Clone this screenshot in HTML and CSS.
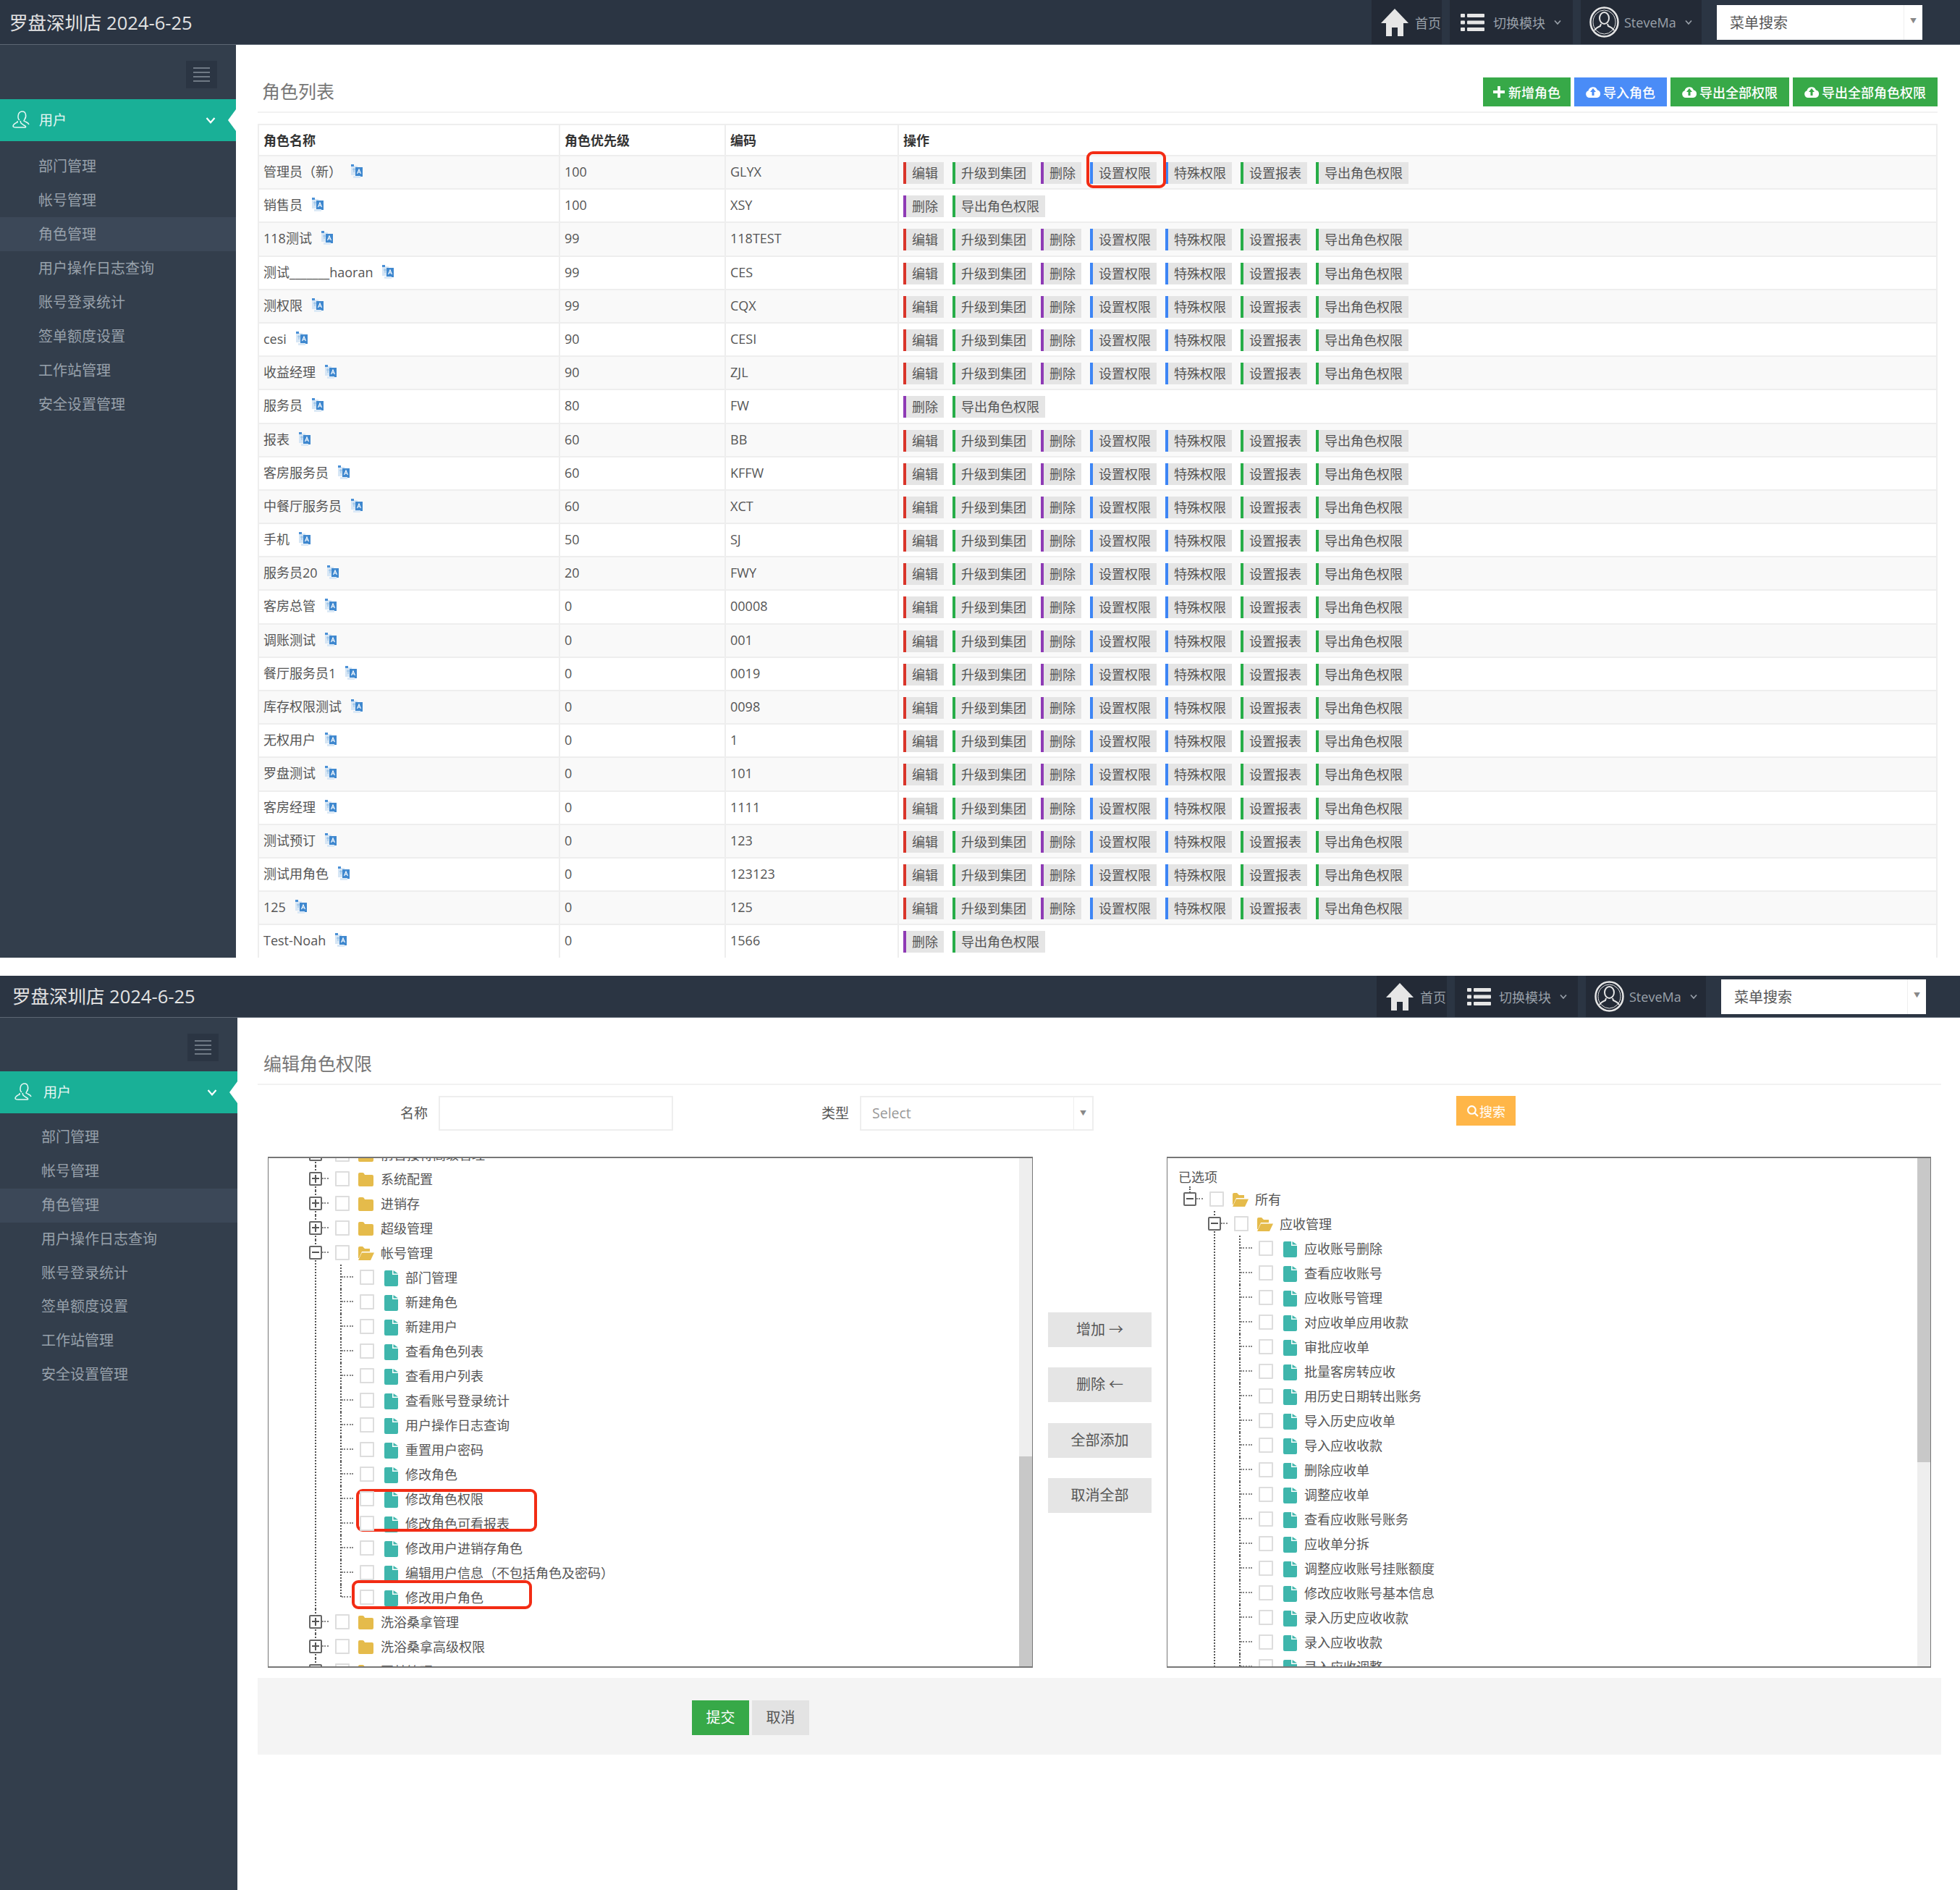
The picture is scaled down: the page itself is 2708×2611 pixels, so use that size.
FILE: index.html
```html
<html>
<head>
	<meta charset="utf-8">
	<link rel="stylesheet" href="styles.css">
</head>
<body>
<svg class="iconDefs" width="0" height="0">
	<symbol id="iconHome" viewBox="0 0 38 38"><path d="M19 0 38 20H31V38H23V26H15V38H7V20H0Z" fill="currentColor"/></symbol>
	<symbol id="iconList" viewBox="0 0 33 24"><g fill="currentColor"><rect x="0" y="0" width="6" height="5" rx="1"/><rect x="9" y="0" width="24" height="5" rx="1"/><rect x="0" y="9.500" width="6" height="5" rx="1"/><rect x="9" y="9.500" width="24" height="5" rx="1"/><rect x="0" y="19" width="6" height="5" rx="1"/><rect x="9" y="19" width="24" height="5" rx="1"/></g></symbol>
	<symbol id="iconAvatar" viewBox="0 0 41 43"><g fill="none" stroke="currentColor"><ellipse cx="20.500" cy="21.500" rx="19" ry="20" stroke-width="2.500"/><ellipse cx="20.500" cy="21.500" rx="15.500" ry="16.500" stroke-width="1"/><ellipse cx="20.500" cy="16" rx="6.500" ry="8" stroke-width="2"/><path d="M16 24 15 27C10 29 8 31 7 33M25 24 26 27C31 29 33 31 34 33" stroke-width="2"/></g></symbol>
	<symbol id="iconChevron" viewBox="0 0 10 8"><path d="M1 1.500 5 6 9 1.500" fill="none" stroke="currentColor" stroke-width="1.600"/></symbol>
	<symbol id="iconUser" viewBox="0 0 24 25"><g fill="none" stroke="currentColor" stroke-width="1.500"><path d="M10 14C7 12 7 3 13 2 19 1 20 9 17 13L16 15C19 17 22 17 23 20"/><path d="M7 15 7 17C4 18 2 19 1 22 1 24 3 24 5 24H18C19 24 19 22 16 21L12 18 11 15"/></g></symbol>
	<symbol id="iconCloud" viewBox="0 0 20 20"><path fill-rule="evenodd" fill="currentColor" d="M5 18A5 5 0 0 1 3.500 8.300 6.500 6.500 0 0 1 16 7.600 5.300 5.300 0 0 1 15.500 18ZM10 5 6 10H8.500V15H11.500V10H14Z"/></symbol>
	<symbol id="iconPlus" viewBox="0 0 17 17"><path d="M6.500 0H10.500V6.500H17V10.500H10.500V17H6.500V10.500H0V6.500H6.500Z" fill="currentColor"/></symbol>
	<symbol id="iconSearch" viewBox="0 0 16 16"><g fill="none" stroke="currentColor" stroke-width="2"><circle cx="7" cy="7" r="5"/><path d="M10.500 10.500 15 15"/></g></symbol>
	<symbol id="iconTranslate" viewBox="0 0 18 20"><path d="M1 2H10V15H1Z" fill="#d6e6f5"/><path d="M1 0H5V3H1Z" fill="#4a90d6"/><path d="M7 4H17V17H7Z" fill="#3f88cf"/><path d="M4 16H14V19H4Z" fill="#dbe9f6"/><path d="M9.500 13 12 7 14.500 13M10.500 11H13.500" fill="none" stroke="#fff" stroke-width="1.100"/><path d="M3 7H7M5 5V11" stroke="#8fbce4" stroke-width="1"/></symbol>
	<symbol id="iconFolder" viewBox="0 0 22 22"><path d="M0 3Q0 1 2 1H6Q8 1 9 4H19Q21 4 21 6V18Q21 20 19 20H2Q0 20 0 18Z" fill="#e5bb4b"/></symbol>
	<symbol id="iconFolderOpen" viewBox="0 0 22 22"><path d="M0 3Q0 1 2 1H6L9 4H16V8H5L1 17H0Z" fill="#e5bb4b"/><path d="M5 9.500H22L17 20H0Z" fill="#e5bb4b"/></symbol>
	<symbol id="iconFile" viewBox="0 0 22 22"><path d="M2 2Q2 0 4 0H13V6H21V20Q21 22 19 22H4Q2 22 2 20Z" fill="#3fb6ac"/><path d="M14.500 0 21 4.500H14.500Z" fill="#3fb6ac"/></symbol>
</svg>

<!-- role list -->
<section class="screen screenList">
	<header class="topBar">
		<div class="brand">罗盘深圳店 2024-6-25</div>
		<nav class="topNav">
			<a class="navCell navHome"><svg class="homeIcon"><use href="#iconHome"/></svg><span>首页</span></a>
			<a class="navCell navModule"><svg class="listIcon"><use href="#iconList"/></svg><span>切换模块</span><svg class="navChevron"><use href="#iconChevron"/></svg></a>
			<a class="navCell navUser"><svg class="avatarIcon"><use href="#iconAvatar"/></svg><span>SteveMa</span><svg class="navChevron"><use href="#iconChevron"/></svg></a>
			<div class="menuSearch"><span class="menuSearchText">菜单搜索</span><span class="selectArrow">▼</span></div>
		</nav>
	</header>
	<div class="screenBody">
		<aside class="sideBar">
			<div class="sideToggle"><div class="toggleBox"><i></i><i></i><i></i><i></i></div></div>
			<div class="sideGroup"><svg class="userIcon"><use href="#iconUser"/></svg><span>用户</span><svg class="groupChevron"><use href="#iconChevron"/></svg></div>
			<ul class="sideMenu">
				<li>部门管理</li>
				<li>帐号管理</li>
				<li class="active">角色管理</li>
				<li>用户操作日志查询</li>
				<li>账号登录统计</li>
				<li>签单额度设置</li>
				<li>工作站管理</li>
				<li>安全设置管理</li>
			</ul>
		</aside>
		<main class="mainPanel">
			<div class="pageHead">
				<div class="pageTitle">角色列表</div>
				<div class="headBtns">
					<a class="headBtn btnGreen"><svg class="plusIcon"><use href="#iconPlus"/></svg>新增角色</a>
					<a class="headBtn headBtnWide btnBlue"><svg class="cloudIcon"><use href="#iconCloud"/></svg>导入角色</a>
					<a class="headBtn headBtnWide btnGreen"><svg class="cloudIcon"><use href="#iconCloud"/></svg>导出全部权限</a>
					<a class="headBtn headBtnWide btnGreen"><svg class="cloudIcon"><use href="#iconCloud"/></svg>导出全部角色权限</a>
				</div>
			</div>
			<div class="roleTable" id="roleTable">
				<div class="roleRow roleHead">
					<div class="roleCell">角色名称</div>
					<div class="roleCell">角色优先级</div>
					<div class="roleCell">编码</div>
					<div class="roleCell">操作</div>
				</div>
			</div>
		</main>
	</div>
	<div class="redMark markPermBtn"></div>
</section>

<!-- edit role permissions -->
<section class="screen screenEdit">
	<header class="topBar">
		<div class="brand">罗盘深圳店 2024-6-25</div>
		<nav class="topNav">
			<a class="navCell navHome"><svg class="homeIcon"><use href="#iconHome"/></svg><span>首页</span></a>
			<a class="navCell navModule"><svg class="listIcon"><use href="#iconList"/></svg><span>切换模块</span><svg class="navChevron"><use href="#iconChevron"/></svg></a>
			<a class="navCell navUser"><svg class="avatarIcon"><use href="#iconAvatar"/></svg><span>SteveMa</span><svg class="navChevron"><use href="#iconChevron"/></svg></a>
			<div class="menuSearch"><span class="menuSearchText">菜单搜索</span><span class="selectArrow">▼</span></div>
		</nav>
	</header>
	<div class="screenBody">
		<aside class="sideBar">
			<div class="sideToggle"><div class="toggleBox"><i></i><i></i><i></i><i></i></div></div>
			<div class="sideGroup"><svg class="userIcon"><use href="#iconUser"/></svg><span>用户</span><svg class="groupChevron"><use href="#iconChevron"/></svg></div>
			<ul class="sideMenu">
				<li>部门管理</li>
				<li>帐号管理</li>
				<li class="active">角色管理</li>
				<li>用户操作日志查询</li>
				<li>账号登录统计</li>
				<li>签单额度设置</li>
				<li>工作站管理</li>
				<li>安全设置管理</li>
			</ul>
		</aside>
		<main class="mainPanel">
			<div class="pageHead">
				<div class="pageTitle">编辑角色权限</div>
			</div>
			<div class="filterRow">
				<label class="filterLabel nameLabel">名称</label>
				<div class="textInput"></div>
				<label class="filterLabel typeLabel">类型</label>
				<div class="selectInput"><span class="selectText">Select</span><span class="selectArrow">▼</span></div>
				<a class="searchBtn"><svg class="searchIcon"><use href="#iconSearch"/></svg>搜索</a>
			</div>
			<div class="treeArea">
				<div class="treeBox">
					<ul class="tree treeAll" id="treeAll"></ul>
					<div class="scrollTrack"><div class="scrollThumb thumbLeft"></div></div>
				</div>
				<div class="moveBtns">
					<a class="moveBtn">增加 →</a>
					<a class="moveBtn">删除 ←</a>
					<a class="moveBtn">全部添加</a>
					<a class="moveBtn">取消全部</a>
				</div>
				<div class="treeBox">
					<div class="treeCaption">已选项</div>
					<ul class="tree treeChosen" id="treeChosen"></ul>
					<div class="scrollTrack"><div class="scrollThumb thumbRight"></div></div>
				</div>
			</div>
			<div class="formFoot">
				<a class="footBtn btnGreen">提交</a>
				<a class="footBtn btnCancel">取消</a>
			</div>
		</main>
	</div>
	<div class="redMark markTreeOne"></div>
	<div class="redMark markTreeTwo"></div>
</section>

<script src="script.js"></script>
</body>
</html>
```

FILE: styles.css
```css
* {
	box-sizing: border-box;
}

body {
	margin: 0;
	background: #fff;
	color: #555;
	font-family: "Open Sans", "Noto Sans CJK SC", sans-serif;
	font-size: 18px;
}

ul {
	list-style: none;
	margin: 0;
	padding: 0;
}

.iconDefs {
	position: absolute;
}

/* the picture holds two separate screens, one above the other */
.screen {
	position: relative;
	display: flex;
	flex-direction: column;
	overflow: hidden;
}

.screenList {
	height: 1323px;
	margin-bottom: 25px;
	--bar-height: 62px;
	--side-width: 326px;
	--head-height: 94px;
}

.screenEdit {
	height: 1263px;
	--bar-height: 58px;
	--side-width: 328px;
	--head-height: 93px;
}

/* top bar */
.topBar {
	flex: none;
	display: flex;
	justify-content: space-between;
	height: var(--bar-height);
	background: #2b3543;
	border-bottom: 1px solid #5d6773;
}

.brand {
	padding-left: 13px;
	color: #e3e3e3;
	font-size: 25.500px;
	line-height: calc(var(--bar-height) + 1px);
}

.screenEdit .brand {
	padding-left: 17px;
	line-height: calc(var(--bar-height) - 1px);
}

.topNav {
	display: flex;
	gap: 11px;
	padding-right: 52px;
}

.screenEdit .topNav {
	padding-right: 47px;
}

.navCell {
	display: flex;
	align-items: center;
	background: #232a36;
	color: #9aa1aa;
	font-size: 18px;
}

.navHome {
	width: 97px;
	padding-left: 13px;
	gap: 9px;
	overflow: hidden;
}

.navModule {
	width: 170px;
	padding-left: 15px;
}

.navUser {
	width: 167px;
	padding-left: 12px;
}

.screenEdit .navUser {
	width: 166px;
}

.homeIcon {
	width: 38px;
	height: 38px;
	color: #e6e6e6;
}

.listIcon {
	width: 33px;
	height: 24px;
	margin-right: 12px;
	color: #e6e6e6;
}

.screenEdit .listIcon {
	margin-right: 11px;
	margin-left: 2px;
}

.avatarIcon {
	width: 41px;
	height: 43px;
	margin-right: 7px;
	color: #e6e6e6;
}

.navChevron {
	width: 10px;
	height: 8px;
	margin-left: 12px;
}

.menuSearch {
	display: flex;
	justify-content: space-between;
	width: 284px;
	height: 48px;
	margin: auto 0 auto 10px;
	background: #fff;
}

.screenEdit .menuSearch {
	width: 283px;
}

.menuSearchText {
	padding-left: 18px;
	font-size: 20px;
	line-height: 50px;
}

.selectArrow {
	width: 26px;
	border-left: 1px solid #eee;
	color: #888;
	font-size: 9px;
	line-height: 44px;
	text-align: center;
}

/* sidebar */
.screenBody {
	flex: 1;
	display: flex;
	min-height: 0;
}

.sideBar {
	flex: none;
	width: var(--side-width);
	background: #333e4c;
}

.sideToggle {
	display: flex;
	justify-content: flex-end;
	height: 75px;
	padding: 22px 26px 0 0;
}

.screenEdit .sideToggle {
	height: 74px;
}

.toggleBox {
	display: flex;
	flex-direction: column;
	align-items: center;
	justify-content: center;
	gap: 4px;
	width: 43px;
	height: 38px;
	background: #2b3543;
}

.toggleBox i {
	width: 23px;
	height: 2px;
	background: #6f7985;
}

.sideGroup {
	position: relative;
	display: flex;
	align-items: center;
	height: 58px;
	padding: 0 0 3px 17px;
	background: #19b097;
	color: #e8f7f4;
	font-size: 19px;
}

.sideGroup::after {
	content: "";
	position: absolute;
	right: 0;
	top: 14px;
	width: 11px;
	height: 30px;
	background: #fff;
	clip-path: polygon(100% 0, 0 50%, 100% 100%);
}

.userIcon {
	width: 24px;
	height: 25px;
	margin-right: 13px;
}

.screenEdit .userIcon {
	margin-left: 3px;
	margin-right: 16px;
}

.groupChevron {
	width: 14px;
	height: 11px;
	position: absolute;
	right: 28px;
	top: 24px;
	color: #fff;
}

.sideMenu {
	padding-top: 11px;
}

.sideMenu li {
	height: 47px;
	padding-left: 53px;
	color: #98a1ab;
	font-size: 20px;
	line-height: 47px;
}

.screenEdit .sideMenu {
	padding-top: 10px;
}

.screenEdit .sideMenu li {
	height: 46.900px;
	padding-left: 57px;
	line-height: 46.900px;
}

.sideMenu li.active {
	background: #3c4858;
}

/* page head */
.mainPanel {
	flex: 1;
	min-width: 0;
	padding: 0 31px 0 30px;
	overflow: hidden;
}

.screenEdit .mainPanel {
	padding: 0 26px 0 28px;
}

.pageHead {
	display: flex;
	justify-content: space-between;
	height: var(--head-height);
	padding-top: 45px;
	border-bottom: 2px solid #f2f2f2;
}

.screenEdit .pageHead {
	padding-top: 44px;
}

.pageTitle {
	padding-left: 6px;
	color: #777;
	font-size: 25px;
	line-height: 38px;
}

.screenEdit .pageTitle {
	padding-left: 8px;
}

.headBtns {
	display: flex;
	gap: 5px;
}

.headBtn {
	display: flex;
	align-items: center;
	height: 40px;
	padding: 0 14px;
	color: #fff;
	font-size: 18px;
	font-weight: 500;
}

.headBtnWide {
	padding: 0 16px;
}

.btnGreen {
	background: #37a948;
	color: #fff;
}

.btnBlue {
	background: #4a8cf7;
}

.plusIcon {
	width: 16px;
	height: 16px;
	margin-right: 5px;
}

.cloudIcon {
	width: 20px;
	height: 20px;
	margin-right: 4px;
}

/* role table */
.roleTable {
	margin-top: 15px;
	border-top: 2px solid #eee;
	border-left: 2px solid #eee;
	border-right: 2px solid #eee;
}

.roleRow {
	display: grid;
	grid-template-columns: 414px 229px 239px 1fr;
	height: 46.200px;
	border-bottom: 2px solid #eee;
}

.roleHead {
	height: 43px;
	color: #333;
	font-weight: bold;
}

.roleStripe {
	background: #f9f9f9;
}

.roleCell {
	padding: 8px 6px 0 6px;
	border-left: 2px solid #eee;
	line-height: 26px;
	white-space: nowrap;
}

.roleCell:first-child {
	border-left: 0;
}

.translateIcon {
	width: 18px;
	height: 20px;
	margin-left: 12px;
	vertical-align: -3px;
}

.opCell {
	display: flex;
	gap: 12px;
}

.opBtn {
	height: 30px;
	padding: 0 8px;
	border-left: 4px solid #999;
	background: #e5e5e5;
	color: #555;
	font-size: 18px;
	line-height: 30px;
}

.opEdit {
	border-left-color: #d9352a;
}

.opGreen {
	border-left-color: #27ad48;
}

.opPurple {
	border-left-color: #8e3bb5;
}

.opBlue {
	border-left-color: #3d85f5;
}

/* filter row */
.filterRow {
	display: flex;
	align-items: flex-start;
	padding-top: 15px;
}

.filterLabel {
	margin-right: 15px;
	color: #555;
	font-size: 19px;
	line-height: 48px;
	text-align: right;
}

.nameLabel {
	width: 235px;
}

.typeLabel {
	width: 243px;
}

.textInput,
.selectInput {
	height: 48px;
	border: 2px solid #eee;
	background: #fff;
}

.textInput {
	width: 324px;
}

.selectInput {
	display: flex;
	justify-content: space-between;
	width: 323px;
}

.selectText {
	padding-left: 15px;
	color: #999;
	font-size: 19.500px;
	line-height: 44px;
}

.searchBtn {
	display: flex;
	align-items: center;
	justify-content: center;
	width: 82px;
	height: 41px;
	margin-left: 501px;
	background: #ffb648;
	color: #fff;
	font-size: 18px;
}

.searchIcon {
	width: 17px;
	height: 17px;
	margin-right: 1px;
}

/* permission trees */
.treeArea {
	display: flex;
	gap: 21px;
	height: 706px;
	margin-top: 36px;
	padding: 0 14px;
}

.treeBox {
	position: relative;
	width: 1056px;
	border: 1px solid #777;
	border-top-width: 2px;
	border-bottom-width: 2px;
	overflow: hidden;
}

.treeBox:first-child {
	width: 1057px;
}

.scrollTrack {
	position: absolute;
	top: 0;
	right: 0;
	bottom: 0;
	width: 18px;
	background: #eee;
}

.scrollThumb {
	position: absolute;
	left: 0;
	right: 0;
	background: #c8c8c8;
}

.thumbLeft {
	top: 412px;
	bottom: 0;
}

.thumbRight {
	top: 0;
	height: 420px;
}

.moveBtns {
	flex: none;
	display: flex;
	flex-direction: column;
	gap: 28.400px;
	width: 143px;
	padding-top: 215px;
}

.moveBtn {
	height: 48px;
	background: #e5e5e5;
	font-size: 20px;
	line-height: 48px;
	text-align: center;
}

.treeAll {
	margin-top: -23px;
	padding-left: 56px;
}

.treeCaption {
	height: 39px;
	padding: 13px 0 0 15px;
	line-height: 26px;
}

.treeChosen {
	padding-left: 22px;
}

.treeNode {
	position: relative;
}

/* vertical connector, runs down the whole node with its children */
.treeNode::before {
	content: "";
	position: absolute;
	left: 8px;
	top: 0;
	bottom: 0;
	border-left: 2px dotted #555;
}

.treeLeaf::before {
	left: 9px;
}

.treeEnd::before {
	bottom: auto;
	height: 17px;
}

.treeRow {
	position: relative;
	display: flex;
	align-items: center;
	height: 34px;
	white-space: nowrap;
}

/* horizontal connector */
.treeRow::after {
	content: "";
	position: absolute;
	left: 18px;
	top: 16px;
	width: 9px;
	border-top: 2px dotted #888;
}

.treeLeaf > .treeRow::after {
	left: 11px;
	width: 16px;
}

.treeChildren {
	margin-left: 34px;
}

.treeSwitch {
	position: relative;
	z-index: 1;
	flex: none;
	width: 18px;
	height: 19px;
	margin-right: 18px;
}

.switchPlus,
.switchMinus {
	border: 2px solid #666;
	border-radius: 2px;
	background: #fff;
}

.switchPlus::before,
.switchMinus::before {
	content: "";
	position: absolute;
	left: 2px;
	right: 2px;
	top: 6.500px;
	height: 2px;
	background: #555;
}

.switchPlus::after {
	content: "";
	position: absolute;
	top: 2px;
	bottom: 2px;
	left: 6px;
	width: 2px;
	background: #555;
}

.treeCheck {
	position: relative;
	z-index: 1;
	flex: none;
	width: 20px;
	height: 21px;
	margin-right: 12px;
	border: 2px solid #ddd;
	border-radius: 1px;
	background: #fff;
}

.treeIcon {
	flex: none;
	width: 22px;
	height: 22px;
	margin: 4px 9px 0 0;
}

.treeName {
	color: #555;
}

/* red marks somebody drew over the screenshots */
.redMark {
	position: absolute;
	border: 4px solid #f22c14;
	border-radius: 9px;
}

.markPermBtn {
	left: 1501px;
	top: 209px;
	width: 110px;
	height: 51px;
}

.markTreeOne {
	left: 492px;
	top: 709px;
	width: 250px;
	height: 59px;
}

.markTreeTwo {
	left: 486px;
	top: 835px;
	width: 249px;
	height: 40px;
}

/* form foot */
.formFoot {
	display: flex;
	gap: 4px;
	height: 106px;
	margin-top: 14px;
	padding: 31px 0 0 600px;
	background: #f4f4f4;
}

.footBtn {
	width: 79px;
	height: 48px;
	font-size: 20px;
	line-height: 48px;
	text-align: center;
}

.btnCancel {
	background: #e3e3e3;
}
```

FILE: script.js
```js
// name, priority, code, short (only delete + export buttons)
var roles = [
	["管理员（新）", "100", "GLYX"],
	["销售员", "100", "XSY", true],
	["118测试", "99", "118TEST"],
	["测试_______haoran", "99", "CES"],
	["测权限", "99", "CQX"],
	["cesi", "90", "CESI"],
	["收益经理", "90", "ZJL"],
	["服务员", "80", "FW", true],
	["报表", "60", "BB"],
	["客房服务员", "60", "KFFW"],
	["中餐厅服务员", "60", "XCT"],
	["手机", "50", "SJ"],
	["服务员20", "20", "FWY"],
	["客房总管", "0", "00008"],
	["调账测试", "0", "001"],
	["餐厅服务员1", "0", "0019"],
	["库存权限测试", "0", "0098"],
	["无权用户", "0", "1"],
	["罗盘测试", "0", "101"],
	["客房经理", "0", "1111"],
	["测试预订", "0", "123"],
	["测试用角色", "0", "123123"],
	["125", "0", "125"],
	["Test-Noah", "0", "1566", true]
];

var allOps = [
	["编辑", "opEdit"], ["升级到集团", "opGreen"], ["删除", "opPurple"], ["设置权限", "opBlue"],
	["特殊权限", "opBlue"], ["设置报表", "opGreen"], ["导出角色权限", "opGreen"]
];
var shortOps = [["删除", "opPurple"], ["导出角色权限", "opGreen"]];

var roleTable = document.getElementById("roleTable");

roles.forEach(function(role, i) {
	var ops = role[3] ? shortOps : allOps;
	var html = '<div class="roleCell">' + role[0] +
		'<svg class="translateIcon"><use href="#iconTranslate"/></svg></div>' +
		'<div class="roleCell">' + role[1] + '</div>' +
		'<div class="roleCell">' + role[2] + '</div>' +
		'<div class="roleCell opCell">';
	ops.forEach(function(op) {
		html += '<a class="opBtn ' + op[1] + '">' + op[0] + '</a>';
	});
	html += '</div>';
	var row = document.createElement("div");
	row.className = i % 2 == 0 ? "roleRow roleStripe" : "roleRow";
	row.innerHTML = html;
	roleTable.appendChild(row);
});

function folder(name, children, cut) {
	return { name: name, children: children, cut: cut };
}

function leaves(names) {
	return names.map(function(name) {
		return { name: name };
	});
}

function buildNode(node, isLast) {
	var li = document.createElement("li");
	var open = node.children && node.children.length;
	var cls = "treeNode";
	if (!node.children) cls += " treeLeaf";
	// cut: the box hides the siblings below, so the connector runs on
	if (isLast && !node.cut) cls += " treeEnd";
	li.className = cls;

	var sw = "treeSwitch";
	if (node.children) sw += open ? " switchMinus" : " switchPlus";
	var icon = !node.children ? "iconFile" : open ? "iconFolderOpen" : "iconFolder";
	li.innerHTML = '<div class="treeRow"><span class="' + sw + '"></span><span class="treeCheck"></span>' +
		'<svg class="treeIcon"><use href="#' + icon + '"/></svg><span class="treeName">' + node.name + '</span></div>';

	if (open) li.appendChild(buildList(node.children));
	return li;
}

function buildList(nodes) {
	var ul = document.createElement("ul");
	ul.className = "treeChildren";
	nodes.forEach(function(node, i) {
		ul.appendChild(buildNode(node, i == nodes.length - 1));
	});
	return ul;
}

var accountLeaves = leaves([
	"部门管理", "新建角色", "新建用户", "查看角色列表", "查看用户列表", "查看账号登录统计",
	"用户操作日志查询", "重置用户密码", "修改角色", "修改角色权限", "修改角色可看报表",
	"修改用户进销存角色", "编辑用户信息（不包括角色及密码）", "修改用户角色"
]);

var treeAll = [
	folder("前台接待高级管理", []),
	folder("系统配置", []),
	folder("进销存", []),
	folder("超级管理", []),
	folder("帐号管理", accountLeaves),
	folder("洗浴桑拿管理", []),
	folder("洗浴桑拿高级权限", []),
	folder("园林管理", [])
];

var receivableLeaves = leaves([
	"应收账号删除", "查看应收账号", "应收账号管理", "对应收单应用收款", "审批应收单",
	"批量客房转应收", "用历史日期转出账务", "导入历史应收单", "导入应收收款", "删除应收单",
	"调整应收单", "查看应收账号账务", "应收单分拆", "调整应收账号挂账额度",
	"修改应收账号基本信息", "录入历史应收收款", "录入应收收款", "录入应收调整"
]);

var allUl = document.getElementById("treeAll");
treeAll.forEach(function(node) {
	allUl.appendChild(buildNode(node, false));
});

var chosenRoot = folder("所有", [folder("应收管理", receivableLeaves, true)]);
document.getElementById("treeChosen").appendChild(buildNode(chosenRoot, true));
```
